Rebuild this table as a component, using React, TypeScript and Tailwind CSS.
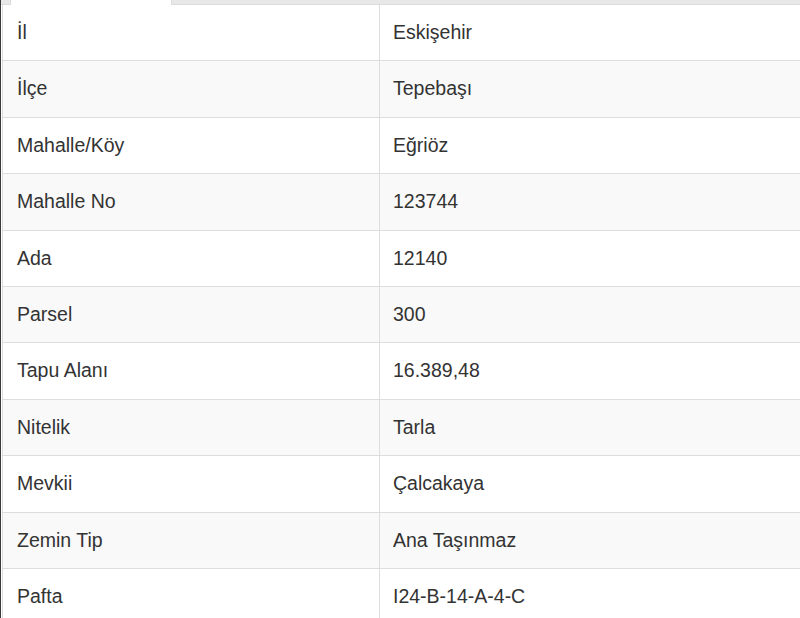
const rows: [string, string][] = [
  ['İl', 'Eskişehir'],
  ['İlçe', 'Tepebaşı'],
  ['Mahalle/Köy', 'Eğriöz'],
  ['Mahalle No', '123744'],
  ['Ada', '12140'],
  ['Parsel', '300'],
  ['Tapu Alanı', '16.389,48'],
  ['Nitelik', 'Tarla'],
  ['Mevkii', 'Çalcakaya'],
  ['Zemin Tip', 'Ana Taşınmaz'],
  ['Pafta', 'I24-B-14-A-4-C'],
];

export default function App() {
  return (
    <div
      className="w-[800px] h-[618px] overflow-hidden bg-white border-l border-[#3a3a3a] text-[#333]"
      style={{ fontFamily: '"Liberation Sans", Arial, sans-serif' }}
    >
      {/* tab strip */}
      <div className="flex h-[5px]">
        <div className="w-[9px] bg-[#e8e8e8] border-b border-[#dcdcdc]" />
        <div className="w-[162px] bg-white border-x border-[#dcdcdc]" />
        <div className="flex-1 bg-[#e8e8e8] border-b border-[#dcdcdc]" />
      </div>

      <div className="ml-[1px] w-[820px] border-l border-[#dddddd]">
        {rows.map(([label, value], i) => (
          <div
            key={label}
            className={`flex h-[56.4px] border-b border-[#dddddd] text-[19.5px] ${i % 2 === 1 ? 'bg-[#f9f9f9]' : 'bg-white'}`}
          >
            <div className="w-[377px] shrink-0 flex items-center pl-[14px] border-r border-[#dddddd]">
              {label}
            </div>
            <div className="flex-1 flex items-center pl-[13px]">{value}</div>
          </div>
        ))}
      </div>
    </div>
  );
}
